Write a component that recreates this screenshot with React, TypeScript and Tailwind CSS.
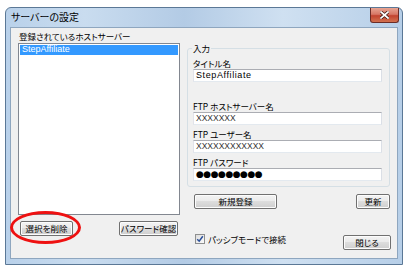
// Server settings dialog (Windows 7 style)

const jp = "font-['Noto_Sans_CJK_JP',sans-serif] [font-feature-settings:'palt']";

function WinButton({ label, className = "" }: { label: string; className?: string }) {
  return (
    <div
      className={`flex h-[15px] items-center justify-center rounded-[2px] border border-[#707070] bg-[linear-gradient(#f3f3f3_0%,#ebebeb_45%,#dddddd_50%,#cfcfcf_100%)] text-[8.5px] leading-none text-black shadow-[inset_0_0_0_1px_#fcfcfc] ${jp} ${className}`}
    >
      {label}
    </div>
  );
}

function Field({ label, children }: { label: string; children: React.ReactNode }) {
  return (
    <div className="flex flex-col gap-[1px]">
      <div className={`h-[10px] text-[8.5px] leading-[10px] text-black ${jp}`}>{label}</div>
      <div className="flex h-[13px] w-[189px] items-center border border-[#abadb3] border-b-[#e3e9ef] border-r-[#dbdfe6] border-l-[#e2e3ea] bg-white pl-[2px]">
        {children}
      </div>
    </div>
  );
}

export default function App() {
  return (
    <div className="h-[272px] w-[409px] bg-white pl-[5px] pt-[7px]">
      <div className="flex h-[258px] w-[398px] flex-col rounded-t-[6px] border border-[#5b7896] bg-[linear-gradient(90deg,#b9d1ea_0%,#c9dcef_20%,#b3cbe5_45%,#cfe0f1_70%,#b7cfe8_100%)] px-[4px] pb-[5px]">
        {/* title bar */}
        <div className="flex h-[19px] items-start justify-between">
          <div className={`pl-[1px] pt-[3px] text-[10px] leading-[12px] text-black ${jp}`}>サーバーの設定</div>
          <div className="-mr-[1px] flex h-[15px] w-[29px] items-center justify-center rounded-b-[3px] border border-t-0 border-[#6b2c26] bg-[linear-gradient(#e8a593_0%,#d77766_45%,#c2432f_55%,#d2714f_100%)]">
            <svg width="9" height="8" viewBox="0 0 9 8">
              <path d="M1 1 L8 7 M8 1 L1 7" stroke="#3a1510" strokeWidth="3.2" strokeLinecap="square" />
              <path d="M1 1 L8 7 M8 1 L1 7" stroke="#ffffff" strokeWidth="1.7" strokeLinecap="square" />
            </svg>
          </div>
        </div>

        {/* client area */}
        <div className="flex flex-1 border border-[#8ea6bf] bg-[#f0f0f0] pl-[7px]">
          {/* left column */}
          <div className="flex w-[162px] flex-col">
            <div className={`flex h-[15px] items-center pl-[1px] pt-[1px] text-[8.5px] text-black ${jp}`}>
              登録されているホストサーバー
            </div>
            <div className="h-[172px] border border-[#828790] bg-white p-[1px]">
              <div className="flex h-[10px] items-center bg-[#3399ff] pl-[2px] font-['Liberation_Sans',sans-serif] text-[9px] text-white">
                StepAffiliate
              </div>
            </div>
            <div className="mt-[6px] flex justify-between px-[2px]">
              <div className="relative">
                <WinButton label="選択を削除" className="w-[53px]" />
                <div className="absolute -bottom-[8px] -left-[10px] -right-[8px] -top-[10px] rounded-[50%] border-[3px] border-[#ee1111]" />
              </div>
              <WinButton label="パスワード確認" className="w-[59px]" />
            </div>
          </div>

          {/* right column */}
          <div className="ml-[7px] flex w-[204px] flex-col">
            <fieldset className="mt-[15px] w-[203px] rounded-[3px] border border-[#d5dfe5] px-[5px] pb-[5px]">
              <legend className={`ml-[-1px] px-[1px] text-[8.5px] leading-[10px] text-black ${jp}`}>入力</legend>
              <div className="mt-[5px] flex flex-col">
                <Field label="タイトル名">
                  <span className="font-['Liberation_Sans',sans-serif] text-[9px] tracking-[0.6px] text-black">StepAffiliate</span>
                </Field>
                <div className="mt-[19px]">
                  <Field label="FTP ホストサーバー名">
                    <span className="font-['Liberation_Sans',sans-serif] text-[8.5px] text-[#333]">XXXXXXX</span>
                  </Field>
                </div>
                <div className="mt-[4px]">
                  <Field label="FTP ユーザー名">
                    <span className="font-['Liberation_Sans',sans-serif] text-[8.5px] text-[#333]">XXXXXXXXXXXX</span>
                  </Field>
                </div>
                <div className="mt-[4px]">
                  <Field label="FTP パスワード">
                    <span className="font-['DejaVu_Sans',sans-serif] text-[9px] leading-none tracking-[-0.5px] text-black">●●●●●●●●●</span>
                  </Field>
                </div>
              </div>
            </fieldset>

            <div className="mt-[7px] flex justify-between pl-[7px] pr-[1px]">
              <WinButton label="新規登録" className="w-[83px]" />
              <WinButton label="更新" className="w-[34px]" />
            </div>

            <div className="mt-[23px] flex items-start justify-between pl-[8px]">
              <div className="flex items-center gap-[3px] pt-[1px]">
                <div className="flex h-[10px] w-[10px] items-center justify-center border border-[#8e8f8f] bg-[linear-gradient(135deg,#dcdcdc,#fbfbfb)]">
                  <svg width="8" height="8" viewBox="0 0 8 8">
                    <path d="M1.2 4.2 L3.2 6.2 L6.8 1.2" stroke="#2a4f9a" strokeWidth="1.5" fill="none" />
                  </svg>
                </div>
                <span className={`text-[8.5px] text-black ${jp}`}>パッシブモードで接続</span>
              </div>
              <WinButton label="閉じる" className="mt-[3px] w-[48px]" />
            </div>
          </div>
        </div>
      </div>
    </div>
  );
}
